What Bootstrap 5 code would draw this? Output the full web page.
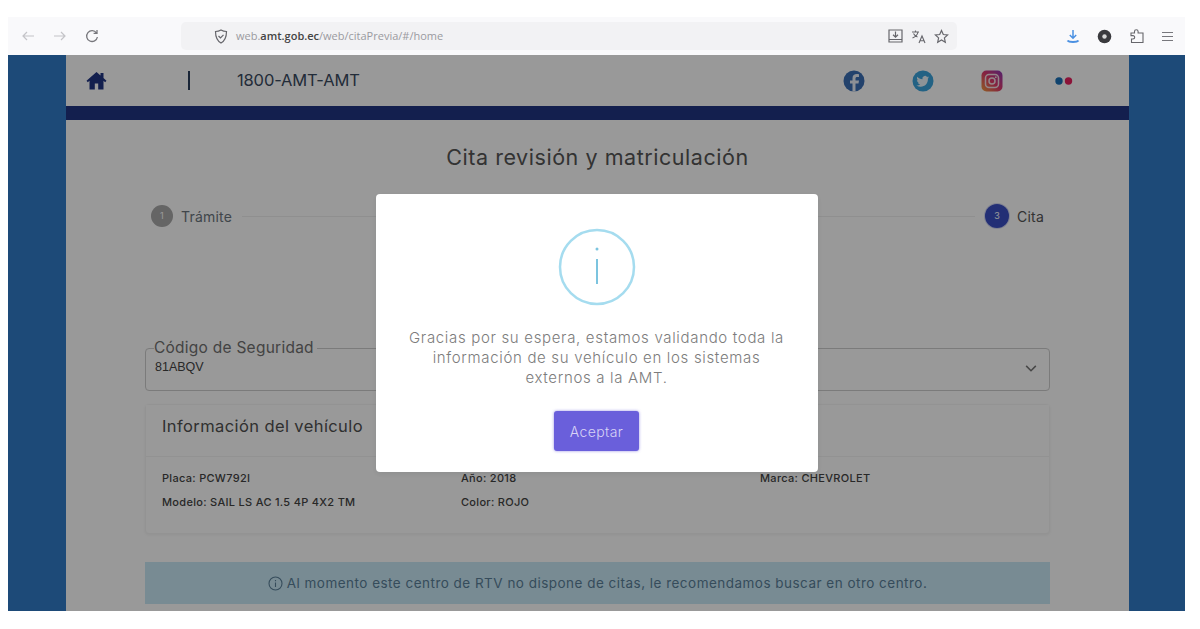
<!DOCTYPE html>
<html>
<head>
    <title>Cita revisión y matriculación</title>
    <link href="https://cdn.jsdelivr.net/npm/bootstrap@5.3.3/dist/css/bootstrap.min.css" rel="stylesheet">
    <style>
        html, body { height: 100%; overflow: hidden; background: #fff; }
        body { font-family: Inter, "Open Sans", sans-serif; color: #555; }
        .shot { height: 629px; padding: 17px 15px 18px 8px; }
        .chrome-bar { height: 38px; background: #f9f9fb; padding: 0 11px 0 12px; }
        .nav-ico { width: 16px; height: 16px; }
        .url-box { margin-left: 81px; width: 776px; height: 28px; background: #f2f2f4; border-radius: 5px; font-family: "Open Sans", sans-serif; font-size: 11px; color: #9a9aa0; padding: 0 8px 0 33px; }
        .url-box b { color: #444; font-weight: 600; }
        .viewport { height: 556px; }
        .side-l { width: 58px; background: #317cc8; }
        .side-r { width: 56px; background: #317cc8; }
        .page-top { height: 51px; padding-left: 20px; padding-right: 55px; }
        .bar-sep { width: 2px; height: 19px; background: #2a3f5c; margin-left: 81px; margin-right: 47px; }
        .phone { font-size: 16.5px; letter-spacing: -.15px; color: #3a4a60; }
        .social { gap: 47px; }
        .band { height: 14px; background: #213583; }
        .page-title { font-size: 21.5px; font-weight: 400; color: #555; margin: 0; padding-top: 25px; height: 76px; text-align: center; letter-spacing: .55px; }
        .steps { padding: 0 85px; height: 40px; font-size: 14px; letter-spacing: .2px; }
        .step-num { width: 22px; height: 22px; border-radius: 50%; font-size: 9px; color: #fff; background: #a8a8a8; }
        .step-num-on { width: 24px; height: 24px; background: #3b4fc4; box-shadow: 0 0 0 1px #d5d9f2; }
        .step-line { height: 1px; background: #efefef; margin: 0 10px; }
        .fields { margin: 112px 79px 0; gap: 34px; height: 43px; }
        .field-box { border: 1.5px solid #cdcdcd; border-radius: 4px; height: 43px; flex: 1; }
        .field-legend { position: absolute; left: 8px; top: -10px; background: #fff; padding-right: 3px; font-size: 15.5px; line-height: 18px; letter-spacing: .25px; color: #707070; }
        .field-value { font-size: 12.5px; padding: 9px 0 0 9px; color: #444; font-family: "Liberation Sans", sans-serif; }
        .chev { position: absolute; right: 12px; top: 16px; width: 12px; height: 7px; }
        .info-card { margin: 13px 79px 0; height: 130px; border: 1px solid #f6f6f6; box-shadow: 0 1px 3px rgba(0,0,0,.05); }
        .info-head { height: 52px; padding: 0 16px 8px; background: #fff; border-bottom: 1px solid #f3f3f3; font-size: 16.5px; font-weight: 400; letter-spacing: .4px; color: #505050; }
        .info-body { padding: 9px 0 0 16px; font-size: 11px; font-weight: 500; letter-spacing: .3px; color: #444; line-height: 24px; }
        .info-col { width: 299px; flex: none; }
        .rtv-alert { margin: 28px 79px 0; height: 42px; background: #c8e8f6; color: #5a7f98; font-size: 13.5px; letter-spacing: .48px; border-radius: 0; }
        .shade { background: rgba(0,0,0,.4); padding-top: 139px; }
        .dlg { width: 442px; height: 278px; background: #fff; border-radius: 4px; text-align: center; padding-top: 34px; }
        .dlg-text { font-size: 15px; line-height: 20px; font-weight: 300; color: #7c7c7c; margin: 22px 26px 0; letter-spacing: .67px; }
        .btn-ok { width: 85px; height: 40px; margin-top: 23px; background: #6a5fdb; border: 0; border-radius: 3px; color: #d8d4f6; font-size: 14px; font-weight: 300; letter-spacing: .4px; box-shadow: 0 0 3px rgba(106,95,219,.7); }
    </style>
</head>
<body>
    <div class="shot d-flex flex-column">
        <div class="chrome-bar d-flex align-items-center">
            <svg class="nav-ico" viewBox="0 0 16 16" fill="none" stroke="#c4c4c8" stroke-width="1.2"><path d="M14 8H3M7 4 3 8l4 4"/></svg>
            <svg class="nav-ico ms-3" viewBox="0 0 16 16" fill="none" stroke="#c4c4c8" stroke-width="1.2"><path d="M2 8h11M9 4l4 4-4 4"/></svg>
            <svg class="nav-ico ms-3" viewBox="0 0 16 16" fill="none" stroke="#77777c" stroke-width="1.3"><path d="M12.5 5A5.4 5.4 0 1 0 13.4 9M13 2v3.4H9.6"/></svg>
            <div class="url-box d-flex align-items-center">
                <svg width="14" height="15" viewBox="0 0 14 15" fill="none" stroke="#66666b" stroke-width="1.2"><path d="M7 1c2 1.200 3.500 1.500 5.500 1.500 0 5-1 9-5.500 11.500C2.500 11.500 1.500 7.500 1.500 2.500 3.500 2.500 5 2.200 7 1Z"/><path d="m4.500 7 2 2 3-3.200"/></svg>
                <span class="ms-2">web.<b>amt.gob.ec</b>/web/citaPrevia/#/home</span>
                <svg class="ms-auto" width="15" height="14" viewBox="0 0 15 14" fill="none" stroke="#66666b" stroke-width="1.2"><path d="M1 1h13v12H1zM1 10.500h13M7.500 2.500v5.500M5 5.800l2.500 2.300L10 5.800"/></svg>
                <svg class="ms-2" width="15" height="15" viewBox="0 0 15 15" fill="none" stroke="#66666b" stroke-width="1.1"><path d="M1 3h7M4.500 1.500V3M7 3C6.500 6 4 8 1.500 9M2.500 4.500C3.500 6.500 5 7.500 6.500 8M8 14l3-7 3 7M9 11.800h4"/></svg>
                <svg class="ms-2" width="15" height="15" viewBox="0 0 15 15" fill="none" stroke="#66666b" stroke-width="1.2"><path d="m7.500 1.500 1.800 4 4.300.5-3.200 2.900.9 4.300-3.800-2.200-3.800 2.200.9-4.300L1.400 6l4.300-.5Z"/></svg>
            </div>
            <svg class="ms-auto" width="14" height="15" viewBox="0 0 14 15" fill="none" stroke="#4a90e2" stroke-width="1.500"><path d="M7 1v8M3.800 6 7 9.200 10.200 6"/><path d="M1.500 11.500c1.500 2 9.500 2 11 0" stroke-width="2"/></svg>
            <svg style="margin-left:17px" width="15" height="15" viewBox="0 0 15 15"><circle cx="7.500" cy="7.500" r="6.800" fill="#3a3a3e"/><circle cx="7.500" cy="7.500" r="2.200" fill="#d8d8d8"/></svg>
            <svg style="margin-left:18px" width="15" height="16" viewBox="0 0 15 16" fill="none" stroke="#66666b" stroke-width="1.100"><path d="M1 5h3.500V3.500a1.800 1.800 0 1 1 3.600 0V5H13v9.500H1.500V11H3a1.700 1.700 0 1 0 0-3.400H1Z"/></svg>
            <svg style="margin-left:16px" width="13" height="11" viewBox="0 0 13 11" fill="none" stroke="#77777c" stroke-width="1.200"><path d="M1 1.500h11M1 5.500h11M1 9.500h11"/></svg>
        </div>

        <div class="viewport d-flex position-relative overflow-hidden">
            <div class="side-l flex-shrink-0"></div>
            <main class="flex-grow-1 bg-white overflow-hidden">
                <div class="page-top d-flex align-items-center">
                    <svg width="21" height="19" viewBox="0 0 21 19" fill="#213583"><path d="M10.500 1 0.500 9.800l1.300 1.400 1.700-1.400V18.500h5.300v-6h3.400v6h5.300V9.800l1.700 1.400 1.300-1.400-3-2.700V2h-3v2.500Z"/></svg>
                    <div class="bar-sep"></div>
                    <span class="phone">1800-AMT-AMT</span>
                    <div class="social d-flex align-items-center ms-auto">
                        <svg width="22" height="22" viewBox="0 0 22 22"><circle cx="11" cy="11" r="10.500" fill="#3b6fb5"/><path d="M12.500 21.500v-8h3l.5-3h-3.500V8.600c0-1 .4-1.600 1.700-1.600H16V4.300c-3.800-.7-6.500.3-6.500 3.900v2.300H7v3h2.500v8Z" fill="#fff" opacity=".9"/></svg>
                        <svg width="22" height="22" viewBox="0 0 22 22"><circle cx="11" cy="11" r="10.500" fill="#3ba4dd"/><path d="M17 7.300c-.5.200-1 .4-1.500.4.500-.3 1-.8 1.200-1.400-.5.300-1 .5-1.700.6a2.600 2.600 0 0 0-4.500 2.400C8.300 9.200 6.500 8.300 5.300 6.800c-.7 1.200-.3 2.700.8 3.500-.4 0-.8-.1-1.200-.3 0 1.300.9 2.400 2.100 2.600-.4.100-.8.100-1.200 0 .3 1 1.300 1.800 2.500 1.800-1.200.9-2.600 1.300-3.900 1.100 5.500 3.300 12-.2 11.500-6.900.5-.4 1-.8 1.100-1.300Z" fill="#fff" opacity=".9"/></svg>
                        <svg width="22" height="22" viewBox="0 0 22 22"><defs><linearGradient id="ig" x1="0" y1="1" x2="1" y2="0"><stop offset="0" stop-color="#f0a03c"/><stop offset=".5" stop-color="#e0396a"/><stop offset="1" stop-color="#8a3ab9"/></linearGradient></defs><rect x=".5" y=".5" width="21" height="21" rx="5" fill="url(#ig)"/><rect x="4.500" y="4.500" width="13" height="13" rx="3.500" fill="none" stroke="#f6dfe4" stroke-width="1.500"/><circle cx="11" cy="11" r="3" fill="none" stroke="#f6dfe4" stroke-width="1.500"/><circle cx="14.800" cy="7.200" r=".9" fill="#f6dfe4"/></svg>
                        <svg class="ms-1" width="20" height="22" viewBox="0 0 20 22"><circle cx="5" cy="11" r="3.700" fill="#1a70b8"/><circle cx="14.500" cy="11" r="3.700" fill="#e8205e"/></svg>
                    </div>
                </div>
                <div class="band"></div>

                <h1 class="page-title">Cita revisión y matriculación</h1>

                <div class="steps d-flex align-items-center">
                    <div class="step-num d-flex align-items-center justify-content-center flex-shrink-0">1</div>
                    <span class="ms-2 text-secondary">Trámite</span>
                    <div class="step-line flex-grow-1"></div>
                    <div class="step-num step-num-on d-flex align-items-center justify-content-center flex-shrink-0">3</div>
                    <span class="ms-2">Cita</span>
                </div>

                <div class="fields d-flex">
                    <div class="field-box position-relative">
                        <div class="field-legend">Código de Seguridad</div>
                        <div class="field-value">81ABQV</div>
                    </div>
                    <div class="field-box position-relative">
                        <svg class="chev" viewBox="0 0 13 8" fill="none" stroke="#777" stroke-width="1.800"><path d="m1 1 5.500 5.500L12 1"/></svg>
                    </div>
                </div>

                <div class="card info-card rounded-1">
                    <div class="info-head d-flex align-items-center">Información del vehículo</div>
                    <div class="info-body d-flex">
                        <div class="info-col">Placa: PCW792I<br>Modelo: SAIL LS AC 1.5 4P 4X2 TM</div>
                        <div class="info-col">Año: 2018<br>Color: ROJO</div>
                        <div class="info-col">Marca: CHEVROLET</div>
                    </div>
                </div>

                <div class="alert rtv-alert d-flex align-items-center justify-content-center border-0 p-0">
                    <svg class="me-1" width="15" height="15" viewBox="0 0 15 15" fill="none" stroke="#5a7f98" stroke-width="1.100"><circle cx="7.500" cy="7.500" r="6.500"/><path d="M7.500 6.500v4.500M7.500 4v1.200"/></svg>
                    Al momento este centro de RTV no dispone de citas, le recomendamos buscar en otro centro.
                </div>
            </main>
            <div class="side-r flex-shrink-0"></div>

            <div class="shade position-absolute top-0 start-0 w-100 h-100 d-flex justify-content-center align-items-start">
                <div class="dlg shadow-sm">
                    <svg width="78" height="78" viewBox="0 0 78 78" fill="none"><circle cx="39" cy="39" r="37" stroke="#a5dcef" stroke-width="2.500"/><circle cx="39" cy="21" r="1.500" fill="#7cc4df"/><path d="M39 31v25" stroke="#7cc4df" stroke-width="2"/></svg>
                    <p class="dlg-text">Gracias por su espera, estamos validando toda la información de su vehículo en los sistemas externos a la AMT.</p>
                    <button type="button" class="btn btn-ok p-0">Aceptar</button>
                </div>
            </div>
        </div>
    </div>
    <script src="https://cdn.jsdelivr.net/npm/bootstrap@5.3.3/dist/js/bootstrap.bundle.min.js"></script>
</body>
</html>
